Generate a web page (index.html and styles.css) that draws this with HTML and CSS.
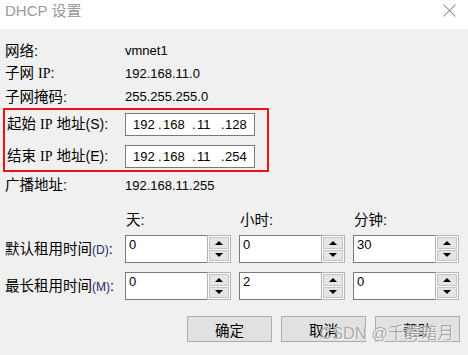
FILE: index.html
```html
<!DOCTYPE html>
<html lang="zh-CN">
<head>
  <meta charset="UTF-8" />
  <title>DHCP 设置</title>
  <link rel="stylesheet" href="styles.css">
</head>
<body>

  <div class="titlebar">
    <span class="title">DHCP 设置</span>
    <span class="close"></span>
  </div>

  <div class="dialog">
    <div class="info-row"><span class="label">网络:</span><span class="value">vmnet1</span></div>
    <div class="info-row"><span class="label">子网 <span class="lat">IP</span>:</span><span class="value">192.168.11.0</span></div>
    <div class="info-row"><span class="label">子网掩码:</span><span class="value">255.255.255.0</span></div>

    <div class="range-box">
      <div class="ip-row">
        <span class="label">起始 <span class="lat">IP</span> 地址<span class="acc">(S)</span>:</span>
        <div class="ip-field">
          <span class="oct o1">192</span><span class="dot d1">.</span><span class="oct o2">168</span><span class="dot d2">.</span><span class="oct o3">11</span><span class="dot d3">.</span><span class="oct">128</span>
        </div>
      </div>
      <div class="ip-row">
        <span class="label">结束 <span class="lat">IP</span> 地址<span class="acc">(E)</span>:</span>
        <div class="ip-field">
          <span class="oct o1">192</span><span class="dot d1">.</span><span class="oct o2">168</span><span class="dot d2">.</span><span class="oct o3">11</span><span class="dot d3">.</span><span class="oct">254</span>
        </div>
      </div>
    </div>

    <div class="info-row bcast"><span class="label">广播地址:</span><span class="value">192.168.11.255</span></div>

    <div class="lease-row heads">
      <span class="label"></span>
      <span class="head">天:</span>
      <span class="head">小时:</span>
      <span class="head">分钟:</span>
    </div>

    <div class="lease-row first">
      <span class="label">默认租用时间<span class="key">(D)</span>:</span>
      <div class="spin"><div class="spin-edit">0</div><div class="spin-btns"><span class="up"></span><span class="down"></span></div></div>
      <div class="spin"><div class="spin-edit">0</div><div class="spin-btns"><span class="up"></span><span class="down"></span></div></div>
      <div class="spin"><div class="spin-edit">30</div><div class="spin-btns"><span class="up"></span><span class="down"></span></div></div>
    </div>

    <div class="lease-row second">
      <span class="label">最长租用时间<span class="key">(M)</span>:</span>
      <div class="spin"><div class="spin-edit">0</div><div class="spin-btns"><span class="up"></span><span class="down"></span></div></div>
      <div class="spin"><div class="spin-edit">2</div><div class="spin-btns"><span class="up"></span><span class="down"></span></div></div>
      <div class="spin"><div class="spin-edit">0</div><div class="spin-btns"><span class="up"></span><span class="down"></span></div></div>
    </div>

    <div class="buttons">
      <button>确定</button>
      <button>取消</button>
      <button>帮助</button>
    </div>
  </div>

  <div class="watermark">CSDN @千醇暗月</div>

</body>
</html>
```

FILE: styles.css
```css
body {
  margin: 0;
  width: 468px;
  height: 355px;
  overflow: hidden;
  background: #f0f0f0;
  color: #000;
  font-family: "Liberation Sans", "Noto Sans CJK SC", sans-serif;
  position: relative;
}

.titlebar {
  height: 29px;
  background: #fff;
  display: flex;
  align-items: center;
  justify-content: space-between;
  padding: 0 12px 0 5px;
}

.title {
  font-size: 15px;
  color: #999;
  line-height: 20px;
  margin-top: -8px;
}

.close {
  position: relative;
  width: 13px;
  height: 13px;
  margin-top: -9px;
}

.close::before,
.close::after {
  content: "";
  position: absolute;
  left: -2px;
  top: 6px;
  width: 17px;
  height: 1px;
  background: #808080;
  transform: rotate(45deg);
}

.close::after {
  transform: rotate(-45deg);
}

.dialog {
  padding: 10px 8px 0 5px;
}

.label {
  font-size: 14.5px;
  line-height: 20px;
  white-space: nowrap;
}

.lat {
  font-family: "Liberation Serif", serif;
  font-size: 14px;
}

.acc {
  font-family: "Liberation Sans", sans-serif;
  font-size: 14px;
}

.key {
  font-size: 12px;
  color: #1a2a6a;
}

.info-row {
  height: 23px;
  display: flex;
  align-items: center;
}

.info-row .label {
  width: 120px;
}

.value {
  font-size: 13px;
}

.range-box {
  margin-left: -2px;
  width: 266px;
  height: 64px;
  box-sizing: border-box;
  border: 2px solid #e8121c;
  padding: 3px 0 0 2px;
}

.ip-row {
  height: 23px;
  display: flex;
  align-items: center;
  margin-bottom: 9px;
}

.ip-row .label {
  width: 118px;
}

.ip-field {
  width: 130px;
  height: 23px;
  box-sizing: border-box;
  border: 1px solid #7a7a7a;
  background: #fff;
  display: flex;
  align-items: center;
  padding-left: 7px;
  font-size: 13px;
}

.oct, .dot {
  display: inline-block;
}

.o1 { width: 25px; }
.o2 { width: 29px; }
.o3 { width: 24px; }
.d1, .d2 { width: 5px; }
.d3 { width: 4px; }

.bcast {
  height: 24px;
  margin-top: 1px;
}

.lease-row {
  display: flex;
  align-items: center;
  gap: 8px;
}

.lease-row .label {
  width: 112px;
}

.heads {
  height: 24px;
  margin-top: 11px;
}

.heads .head {
  width: 106px;
  font-size: 14.5px;
  line-height: 20px;
  padding-left: 1px;
  box-sizing: border-box;
}

.first {
  margin-top: 3px;
}

.second {
  margin-top: 9px;
}

.spin {
  width: 106px;
  height: 28px;
  display: flex;
}

.spin-edit {
  flex: 1;
  border: 1px solid #7a7a7a;
  border-right: none;
  background: #fff;
  font-size: 13px;
  padding: 1px 0 0 3px;
  line-height: 16px;
}

.spin-btns {
  width: 20px;
  border: 1px solid #b4b4b4;
  background: #fff;
  display: flex;
  flex-direction: column;
  padding: 1px;
  gap: 1px;
}

.spin-btns span {
  flex: 1;
  background: #e5e5e5;
  border: 1px solid #c4c4c4;
  display: flex;
  align-items: center;
  justify-content: center;
}

.spin-btns .up::before {
  content: "";
  border-left: 4px solid transparent;
  border-right: 4px solid transparent;
  border-bottom: 4px solid #000;
}

.spin-btns .down::before {
  content: "";
  border-left: 4px solid transparent;
  border-right: 4px solid transparent;
  border-top: 4px solid #000;
}

.buttons {
  display: flex;
  justify-content: flex-end;
  gap: 9px;
  margin-top: 16px;
}

button {
  width: 85px;
  height: 26px;
  background: #e1e1e1;
  border: 1px solid #adadad;
  font-family: "Liberation Sans", "Noto Sans CJK SC", sans-serif;
  font-size: 14.5px;
  color: #000;
  padding: 0;
}

.watermark {
  position: absolute;
  left: 320px;
  top: 320px;
  font-size: 16.5px;
  color: rgba(120, 120, 120, 0.65);
  text-shadow: 0 0 1px #fff, 1px 1px 0 rgba(255, 255, 255, 0.8);
  white-space: nowrap;
}
```
